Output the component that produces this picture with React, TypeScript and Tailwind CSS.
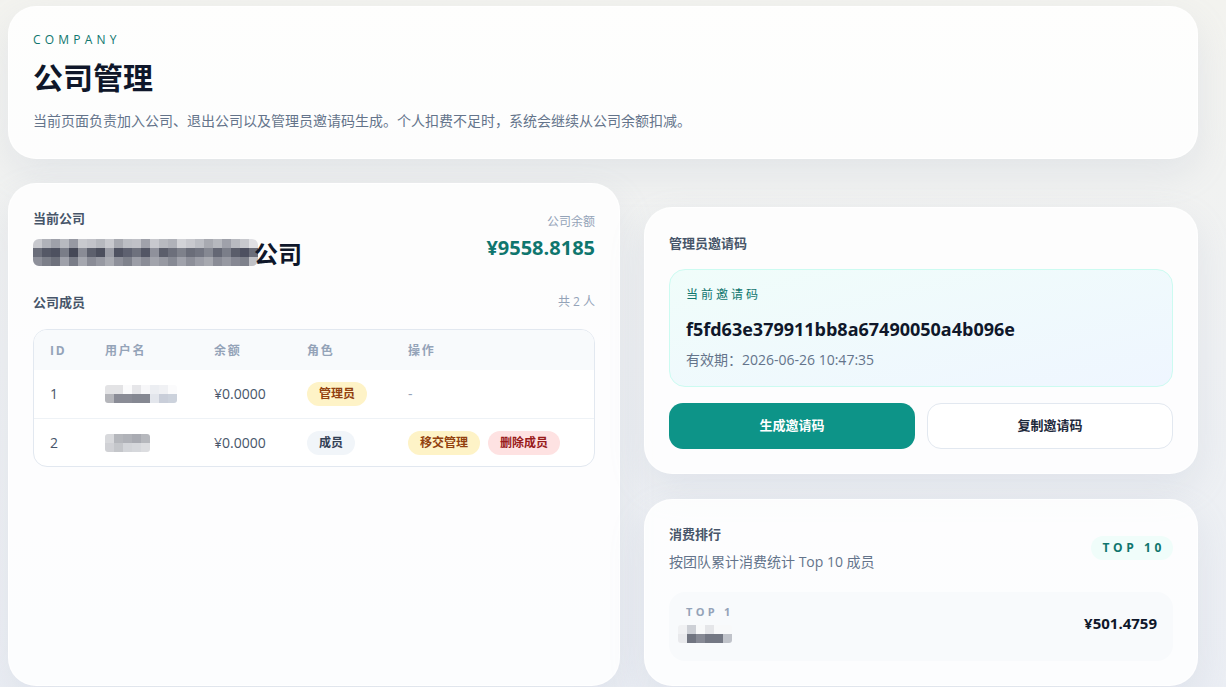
import React from 'react';

// pixelated (blurred) names, as in the screenshot
const companyMosaic: string[][] = [
  ['bg-[#c8c9ce]', 'bg-[#b0b2b9]', 'bg-[#9fa1aa]', 'bg-[#b8bac0]', 'bg-[#9799a3]', 'bg-[#c8c9ce]', 'bg-[#c2c3c9]', 'bg-[#b6b8be]', 'bg-[#c8c9ce]', 'bg-[#a8aab1]', 'bg-[#bcbec4]', 'bg-[#c0c1c7]', 'bg-[#a0a2ab]', 'bg-[#c8c9ce]', 'bg-[#b8bac0]', 'bg-[#b0b2b9]', 'bg-[#d2d3d7]', 'bg-[#c8c9ce]', 'bg-[#bcbec4]', 'bg-[#a8aab1]', 'bg-[#b6b8be]', 'bg-[#9fa1aa]', 'bg-[#b8bac0]', 'bg-[#c8c9ce]', 'bg-[#e0e0e4]'],
  ['bg-[#6b6e7a]', 'bg-[#555866]', 'bg-[#4e5160]', 'bg-[#7a7d88]', 'bg-[#454857]', 'bg-[#8a8c96]', 'bg-[#5d606d]', 'bg-[#4c4f5d]', 'bg-[#9a9ca5]', 'bg-[#4f5261]', 'bg-[#5e6170]', 'bg-[#6e717d]', 'bg-[#535665]', 'bg-[#8f919b]', 'bg-[#5b5e6b]', 'bg-[#6c6f7b]', 'bg-[#7e818b]', 'bg-[#6a6d79]', 'bg-[#727581]', 'bg-[#858892]', 'bg-[#646774]', 'bg-[#7b7e89]', 'bg-[#5a5d6a]', 'bg-[#4d5060]', 'bg-[#6b6e7a]'],
  ['bg-[#8e909a]', 'bg-[#7c7f89]', 'bg-[#6e717c]', 'bg-[#9fa1aa]', 'bg-[#7a7d88]', 'bg-[#a5a7af]', 'bg-[#8a8c96]', 'bg-[#9799a2]', 'bg-[#a9abb2]', 'bg-[#8e909a]', 'bg-[#7f828c]', 'bg-[#9c9ea7]', 'bg-[#8b8d97]', 'bg-[#a2a4ac]', 'bg-[#9799a2]', 'bg-[#878a94]', 'bg-[#a0a2ab]', 'bg-[#8d8f99]', 'bg-[#9c9ea7]', 'bg-[#a7a9b0]', 'bg-[#8a8c96]', 'bg-[#9799a2]', 'bg-[#868893]', 'bg-[#7e818b]', 'bg-[#c0c1c6]'],
];

const userMosaicA: string[][] = [
  ['bg-[#e3e3e5]', 'bg-[#e3e3e5]', 'bg-[#fbfbfc]', 'bg-[#e6e6e9]', 'bg-[#f7f7f9]', 'bg-[#eceef2]', 'bg-[#f0f1f4]', 'bg-[#fbfbfc]'],
  ['bg-[#b5b6bb]', 'bg-[#8a8c96]', 'bg-[#8a8c96]', 'bg-[#858892]', 'bg-[#858892]', 'bg-[#e3e6ec]', 'bg-[#c9ced9]', 'bg-[#ccd2dc]'],
];

const userMosaicB: string[][] = [
  ['bg-[#d8d9dc]', 'bg-[#b5b7bc]', 'bg-[#b0b2b8]', 'bg-[#a9abb2]', 'bg-[#b6b8bd]'],
  ['bg-[#d0d1d5]', 'bg-[#c4c6ca]', 'bg-[#d3d5d9]', 'bg-[#d6d8dc]', 'bg-[#dcdde0]'],
];

const topMosaic: string[][] = [
  ['bg-[#f0f1f3]', 'bg-[#cdd0d6]', 'bg-[#f8f9fa]', 'bg-[#e5e6e9]', 'bg-[#f8f9fa]', 'bg-[#f8f9fa]'],
  ['bg-[#e8e9ec]', 'bg-[#717581]', 'bg-[#878a95]', 'bg-[#747884]', 'bg-[#747884]', 'bg-[#c0c3ca]'],
];

const Mosaic: React.FC<{ cells: string[][]; rounded?: boolean }> = ({ cells, rounded }) => (
  <div className={`inline-flex flex-col overflow-hidden ${rounded ? 'rounded-[6px]' : 'rounded-[3px]'}`}>
    {cells.map((row, i) => (
      <div key={i} className="flex">
        {row.map((c, j) => (
          <div key={j} className={`h-[9px] w-[9px] ${c}`} />
        ))}
      </div>
    ))}
  </div>
);

const members = [
  { id: 1, cells: userMosaicA, balance: '¥0.0000', role: 'admin' },
  { id: 2, cells: userMosaicB, balance: '¥0.0000', role: 'member' },
];

const cardCls =
  'rounded-[28px] border border-white/70 bg-white/85 shadow-[0_14px_36px_rgba(148,163,184,0.16)]';

const App: React.FC = () => {
  return (
    <div className="min-h-screen bg-gradient-to-b from-[#f3f3ef] via-[#eff1f3] to-[#ebeef4] pl-2 pr-7 pt-1.5 pb-6 font-['Segoe_UI','Open_Sans','Noto_Sans_CJK_SC',sans-serif] text-[#0f172a]">
      {/* header */}
      <div className={`${cardCls} bg-[#fdfdfb] px-6 pt-[25px] pb-[27px]`}>
        <p className="text-xs leading-4 tracking-[0.35em] text-[#0f766e]">COMPANY</p>
        <h1 className="mt-3 text-[30px] font-bold leading-9 text-[#0f172a]">公司管理</h1>
        <p className="mt-[15px] text-sm leading-5 text-[#64748b]">
          当前页面负责加入公司、退出公司以及管理员邀请码生成。个人扣费不足时，系统会继续从公司余额扣减。
        </p>
      </div>

      <div className="mt-6 grid grid-cols-[612px_minmax(0,1fr)] gap-6">
        {/* current company */}
        <div className={`${cardCls} bg-[#fbfdfc] px-6 pt-6 pb-6`}>
          <div className="flex items-start justify-between">
            <div>
              <p className="text-[13px] font-bold leading-5 text-[#475569]">当前公司</p>
              <div className="mt-2 flex h-8 items-center">
                <Mosaic cells={companyMosaic} rounded />
                <span className="-ml-[4px] mt-[3px] text-2xl font-bold leading-8 text-[#0f172a]">公司</span>
              </div>
            </div>
            <div className="pt-[6px] text-right">
              <p className="text-xs leading-4 text-[#94a3b8]">公司余额</p>
              <p className="mt-1 text-[20px] font-bold leading-7 text-[#0f766e]">¥9558.8185</p>
            </div>
          </div>

          <div className="mt-6 flex items-center justify-between">
            <p className="text-[13px] font-bold leading-5 text-[#475569]">公司成员</p>
            <p className="text-xs leading-5 text-[#94a3b8]">共 2 人</p>
          </div>

          <div className="mt-[17px] overflow-hidden rounded-[14px] border border-[#e2e8f0] bg-white">
            <div className="grid h-10 grid-cols-[55px_109px_93px_101px_1fr] items-center bg-[#f8fafc] px-4 pt-[2px] text-xs font-bold tracking-[0.15em] text-[#94a3b8]">
              <span>ID</span>
              <span>用户名</span>
              <span>余额</span>
              <span>角色</span>
              <span>操作</span>
            </div>
            {members.map((m, i) => (
              <div
                key={m.id}
                className={`grid h-12 grid-cols-[55px_109px_93px_101px_1fr] items-center px-4 text-sm text-[#475569] ${i > 0 ? 'border-t border-[#eef2f6]' : ''}`}
              >
                <span>{m.id}</span>
                <span className="flex">
                  <Mosaic cells={m.cells} />
                </span>
                <span>{m.balance}</span>
                <span>
                  {m.role === 'admin' ? (
                    <span className="inline-flex h-6 items-center rounded-full bg-[#fef3c7] px-3 text-xs font-bold text-[#92400e]">管理员</span>
                  ) : (
                    <span className="inline-flex h-6 items-center rounded-full bg-[#f1f5f9] px-3 text-xs font-bold text-[#334155]">成员</span>
                  )}
                </span>
                <span className="flex items-center gap-2">
                  {m.role === 'admin' ? (
                    <span className="text-[#94a3b8]">-</span>
                  ) : (
                    <>
                      <button className="inline-flex h-6 items-center rounded-full bg-[#fef3c7] px-3 text-xs font-bold text-[#92400e]">移交管理</button>
                      <button className="inline-flex h-6 items-center rounded-full bg-[#fee2e2] px-3 text-xs font-bold text-[#991b1b]">删除成员</button>
                    </>
                  )}
                </span>
              </div>
            ))}
          </div>
        </div>

        {/* right column */}
        <div className="mt-6 flex flex-col gap-[25px]">
          <div className={`${cardCls} bg-[#fefdfd] px-6 pt-[25px] pb-6`}>
            <p className="text-[13px] font-bold leading-5 text-[#475569]">管理员邀请码</p>
            <div className="mt-4 rounded-[16px] border border-[#ccfbf1] bg-gradient-to-br from-[#f0fdfa] to-[#eff6ff] px-4 pt-[17px] pb-4">
              <p className="text-xs leading-4 tracking-[0.25em] text-[#0f766e]">当前邀请码</p>
              <p className="mt-3 text-[18px] font-bold leading-7 text-[#0f172a]">f5fd63e379911bb8a67490050a4b096e</p>
              <p className="mt-[7px] text-sm leading-5 text-[#64748b]">有效期：2026-06-26 10:47:35</p>
            </div>
            <div className="mt-4 grid grid-cols-2 gap-3">
              <button className="h-[46px] rounded-[14px] bg-[#0d9488] text-[13px] font-bold text-white">生成邀请码</button>
              <button className="h-[46px] rounded-[14px] border border-[#e2e8f0] bg-white text-[13px] font-bold text-[#1e293b]">复制邀请码</button>
            </div>
          </div>

          <div className={`${cardCls} bg-white px-6 pt-6 pb-6`}>
            <div className="flex items-center justify-between">
              <div>
                <p className="text-[13px] font-bold leading-5 text-[#475569]">消费排行</p>
                <p className="mt-2 text-sm leading-5 text-[#64748b]">按团队累计消费统计 Top 10 成员</p>
              </div>
              <span className="inline-flex h-6 items-center rounded-full bg-[#f0fdfa] pl-3 pr-2 text-xs font-bold tracking-[0.3em] text-[#0f766e]">TOP 10</span>
            </div>
            <div className="mt-5 flex items-center justify-between rounded-[16px] bg-[#f8fafc] pl-[9px] pr-4 pt-3 pb-[18px]">
              <div>
                <p className="pl-2 text-[11px] font-bold leading-4 tracking-[0.3em] text-[#94a3b8]">TOP 1</p>
                <div className="mt-[5px] flex">
                  <Mosaic cells={topMosaic} />
                </div>
              </div>
              <p className="text-[15px] font-bold text-[#0f172a]">¥501.4759</p>
            </div>
          </div>
        </div>
      </div>
    </div>
  );
};

export default App;
